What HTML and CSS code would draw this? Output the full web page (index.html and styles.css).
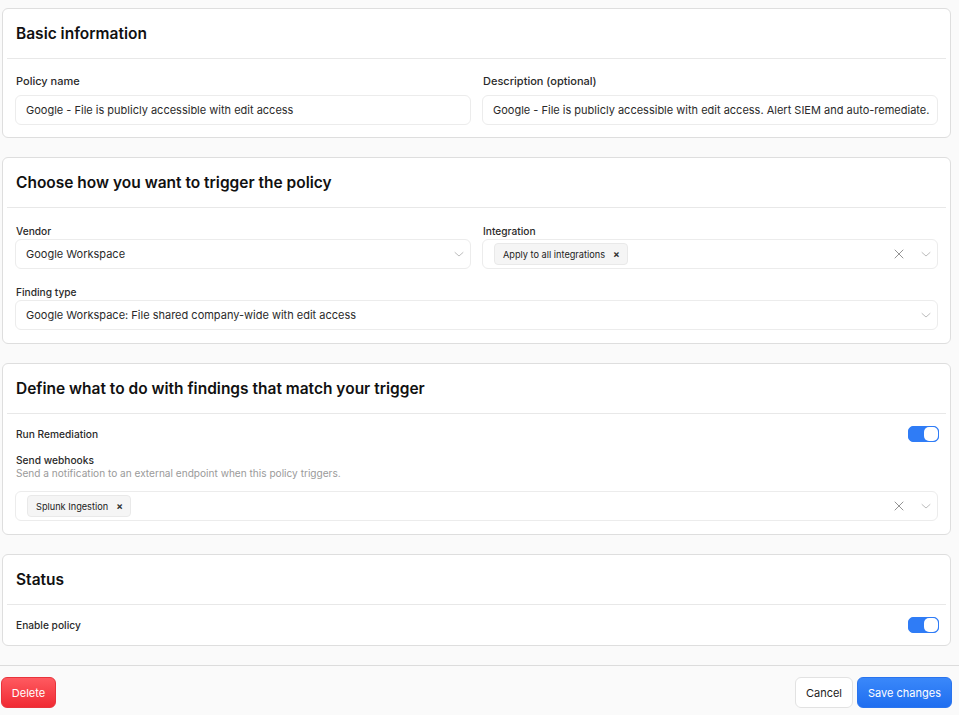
FILE: index.html
```html
<!DOCTYPE html>
<html>

<head>
    <title>Edit policy</title>
    <link rel="stylesheet" href="styles.css">
</head>

<body>
    <div class="policy-page">
        <div class="policy-card">
            <div class="card-header">Basic information</div>
            <div class="card-body basic-grid">
                <div class="field">
                    <div class="field-label">Policy name</div>
                    <div class="text-input">Google - File is publicly accessible with edit access</div>
                </div>
                <div class="field">
                    <div class="field-label">Description (optional)</div>
                    <div class="text-input">Google - File is publicly accessible with edit access. Alert SIEM and auto-remediate.</div>
                </div>
            </div>
        </div>

        <div class="policy-card">
            <div class="card-header">Choose how you want to trigger the policy</div>
            <div class="card-body trigger-grid">
                <div class="field tight">
                    <div class="field-label">Vendor</div>
                    <div class="select-input">
                        <span class="select-value">Google Workspace</span>
                        <svg class="chevron" viewBox="0 0 12 12"><path d="M2 4.5 L6 8 L10 4.5" /></svg>
                    </div>
                </div>
                <div class="field tight">
                    <div class="field-label">Integration</div>
                    <div class="select-input">
                        <span class="chip">Apply to all integrations <span class="chip-x">&times;</span></span>
                        <span class="select-spacer"></span>
                        <svg class="clear" viewBox="0 0 12 12"><path d="M2 2 L10 10 M10 2 L2 10" /></svg>
                        <svg class="chevron" viewBox="0 0 12 12"><path d="M2 4.5 L6 8 L10 4.5" /></svg>
                    </div>
                </div>
                <div class="field tight wide">
                    <div class="field-label">Finding type</div>
                    <div class="select-input">
                        <span class="select-value">Google Workspace: File shared company-wide with edit access</span>
                        <svg class="chevron" viewBox="0 0 12 12"><path d="M2 4.5 L6 8 L10 4.5" /></svg>
                    </div>
                </div>
            </div>
        </div>

        <div class="policy-card">
            <div class="card-header">Define what to do with findings that match your trigger</div>
            <div class="card-body action-body">
                <div class="toggle-row">
                    <div class="field-label">Run Remediation</div>
                    <div class="toggle"><span class="toggle-knob"></span></div>
                </div>
                <div class="webhook-block">
                    <div class="field-label">Send webhooks</div>
                    <div class="field-hint">Send a notification to an external endpoint when this policy triggers.</div>
                </div>
                <div class="select-input">
                    <span class="chip">Splunk Ingestion <span class="chip-x">&times;</span></span>
                    <span class="select-spacer"></span>
                    <svg class="clear" viewBox="0 0 12 12"><path d="M2 2 L10 10 M10 2 L2 10" /></svg>
                    <svg class="chevron" viewBox="0 0 12 12"><path d="M2 4.5 L6 8 L10 4.5" /></svg>
                </div>
            </div>
        </div>

        <div class="policy-card">
            <div class="card-header">Status</div>
            <div class="card-body status-body">
                <div class="toggle-row">
                    <div class="field-label">Enable policy</div>
                    <div class="toggle"><span class="toggle-knob"></span></div>
                </div>
            </div>
        </div>
    </div>

    <div class="policy-footer">
        <button class="btn btn-danger">Delete</button>
        <div class="footer-actions">
            <button class="btn btn-plain">Cancel</button>
            <button class="btn btn-primary">Save changes</button>
        </div>
    </div>
</body>

</html>
```

FILE: styles.css
```css
body {
    font-family: Inter, "Noto Sans", Arial, sans-serif;
    background-color: #fafafa;
    color: #1a1a1a;
    margin: 0;
    padding: 0;
}

.policy-page {
    display: flex;
    flex-direction: column;
    gap: 19px;
    padding: 8px 8px 0 2px;
}

.policy-card {
    background-color: #fff;
    border: 1px solid #dedede;
    border-radius: 6px;
}

.card-header {
    height: 49px;
    display: flex;
    align-items: center;
    padding: 0 9px;
    margin: 0 4px;
    border-bottom: 1px solid #e8e8e8;
    font-size: 15.5px;
    font-weight: 600;
    color: #111;
}

.card-body {
    padding: 15px 12px 12px 12px;
}

.basic-grid,
.trigger-grid {
    display: grid;
    grid-template-columns: minmax(0, 1fr) minmax(0, 1fr);
    column-gap: 11px;
}

.trigger-grid {
    row-gap: 16px;
    padding-top: 16px;
    padding-bottom: 13px;
}

.field {
    display: flex;
    flex-direction: column;
    gap: 7px;
}

.field.tight {
    gap: 1px;
}

.field.wide {
    grid-column: 1 / 3;
}

.field-label {
    font-size: 10.2px;
    line-height: 14px;
    font-weight: 500;
    color: #2a2a2a;
    padding-left: 1px;
}

.basic-grid .field-label {
    font-size: 11px;
}

.field-hint {
    font-size: 10.1px;
    line-height: 13px;
    color: #9a9a9a;
    padding-left: 1px;
}

.text-input,
.select-input {
    height: 28px;
    border: 1px solid #ececec;
    border-radius: 6px;
    background-color: #fff;
    display: flex;
    align-items: center;
    padding: 0 10px;
    font-size: 11px;
    color: #2a2a2a;
    white-space: nowrap;
    overflow: hidden;
}

.select-input {
    padding: 0 5px 0 10px;
}

.select-value {
    flex: 1;
}

.select-spacer {
    flex: 1;
}

.chip {
    display: inline-flex;
    align-items: center;
    gap: 8px;
    height: 20px;
    padding: 0 7px 0 8px;
    margin-left: 1px;
    background-color: #f5f5f5;
    border: 1px solid #e9e9e9;
    border-radius: 4px;
    font-size: 9.2px;
    color: #222;
}

.chip-x {
    font-size: 10px;
    font-weight: 700;
    color: #333;
}

.chevron,
.clear {
    width: 12px;
    height: 12px;
    fill: none;
    stroke-linecap: round;
}

.chevron {
    stroke: #b4b4b4;
    stroke-width: 0.9;
}

.clear {
    stroke: #888;
    stroke-width: 0.9;
    margin-right: 15px;
}

.action-body {
    display: flex;
    flex-direction: column;
    padding-top: 12px;
    padding-bottom: 13px;
}

.toggle-row {
    display: flex;
    align-items: center;
    justify-content: space-between;
    height: 16px;
    margin-right: -1px;
}

.webhook-block {
    margin-top: 12px;
    margin-bottom: 11px;
}

.webhook-block .field-label {
    line-height: 13px;
}

.status-body {
    padding-top: 12px;
    padding-bottom: 12px;
}

.toggle {
    width: 29px;
    height: 14px;
    background-color: #2f7cf6;
    border: 1px solid #2f7cf6;
    border-radius: 5px;
    display: flex;
    justify-content: flex-end;
}

.toggle-knob {
    width: 14px;
    height: 14px;
    background-color: #fff;
    border-radius: 5px;
}

.policy-footer {
    margin-top: 19px;
    border-top: 1px solid #dcdcdc;
    padding: 11px 7px 0 1px;
    display: flex;
    justify-content: space-between;
}

.footer-actions {
    display: flex;
    gap: 4px;
}

.btn {
    font-family: Inter, "Noto Sans", Arial, sans-serif;
    font-size: 11px;
    height: 31px;
    border-radius: 6px;
    padding: 0;
    box-sizing: border-box;
    white-space: nowrap;
    cursor: pointer;
}

.btn-danger {
    width: 55px;
    color: #fff;
    background: linear-gradient(#ff5a60, #f02a33);
    border: 1px solid #e8333b;
}

.btn-plain {
    width: 58px;
    color: #222;
    background-color: #fff;
    border: 1px solid #e2e2e2;
}

.btn-primary {
    width: 95px;
    color: #fff;
    background: linear-gradient(#3a88fa, #1f6ef0);
    border: 1px solid #2a74ee;
}
```
